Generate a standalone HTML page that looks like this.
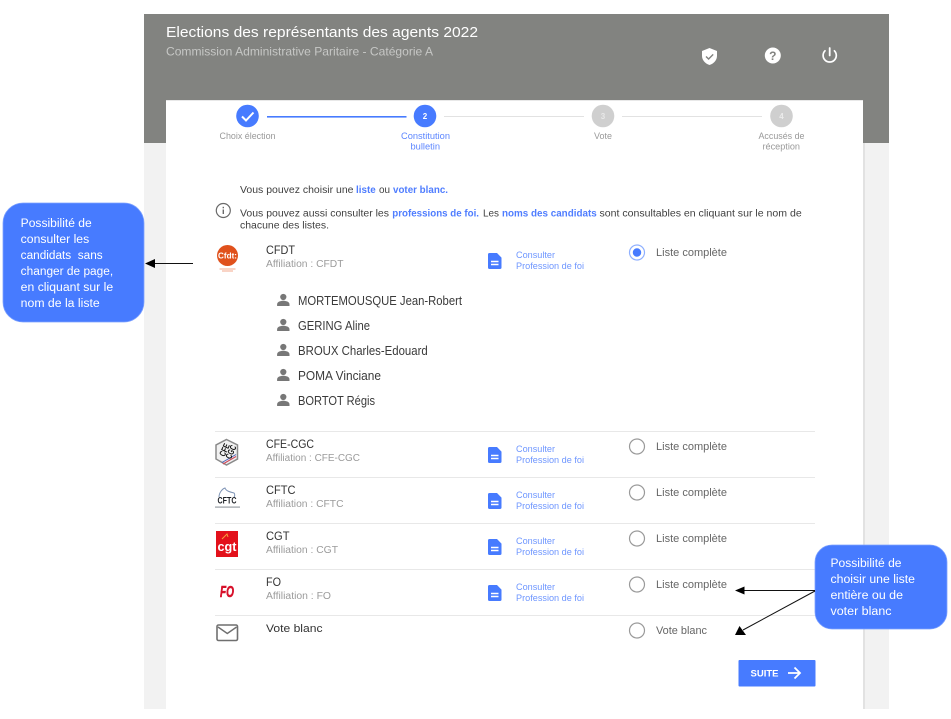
<!DOCTYPE html>
<html lang="fr">
<head>
<meta charset="utf-8">
<title>Elections des représentants des agents 2022</title>
<style>
html,body{margin:0;padding:0;background:#fff;width:951px;height:719px;overflow:hidden}
svg{display:block}
text{font-family:"Liberation Sans",sans-serif;white-space:pre}
.d{fill:#3f3f3f;font-size:10px}
.n{fill:#333;font-size:12px}
.a{fill:#9b9b9b;font-size:10px}
.c{fill:#6e96ff;font-size:9px}
.r{fill:#666;font-size:11px}
.p{fill:#3a3a3a;font-size:12.5px}
.s{font-size:9px;fill:#999}
.b{fill:#4f7dff;font-size:10px;font-weight:bold}
.w{fill:#fff;font-size:11.5px}
</style>
</head>
<body>
<svg width="951" height="719" viewBox="0 0 951 719" xmlns="http://www.w3.org/2000/svg">
<defs>
<g id="doc"><path d="M1.5 0h7.500L13.500 4.600V14.500a1.500 1.500 0 0 1-1.500 1.500H1.500a1.500 1.500 0 0 1-1.500-1.500V1.500a1.500 1.500 0 0 1 1.500-1.500z" fill="#477bff"/><path d="M3 8.500h7.500M3 11.500h7.500" stroke="#fff" stroke-width="1.500"/></g>
<g id="per"><circle cx="0" cy="-3" r="3.100" fill="#777"/><path d="M-6.200 6v-1.800C-6.200 1.800-2.500.8 0 .8s6.200 1 6.200 3.400V6z" fill="#777"/></g>
<g id="rad"><circle r="7.500" fill="#fff" stroke="#9a9a9a" stroke-width="1.200"/></g>
</defs>

<rect x="144" y="14" width="745" height="695" fill="#f2f2f2"/>
<rect x="144" y="14" width="745" height="129" fill="#828380"/>
<rect x="863" y="143" width="2" height="566" fill="#e2e2e2"/>
<rect x="166" y="100" width="697" height="609" fill="#fff"/>
<rect x="166" y="100" width="697" height="1" fill="#e8e8e8"/>

<text x="166" y="37" fill="#fff" font-size="15" textLength="312" lengthAdjust="spacingAndGlyphs">Elections des représentants des agents 2022</text>
<text x="166" y="55.500" fill="#c6c7c5" font-size="12" textLength="267" lengthAdjust="spacingAndGlyphs">Commission Administrative Paritaire - Catégorie A</text>

<path d="M709.500 48l7.500 3v4.800c0 4.400-3.200 8-7.500 9.200-4.300-1.200-7.500-4.800-7.500-9.200V51z" fill="#fff"/>
<path d="M706 56.500l2.600 2.500 4.600-4.600" fill="none" stroke="#828380" stroke-width="1.400"/>
<circle cx="772.800" cy="55.500" r="8" fill="#fff"/>
<text x="772.800" y="60" text-anchor="middle" fill="#828380" font-size="12" font-weight="bold">?</text>
<path d="M829.700 48v7.500" stroke="#fff" stroke-width="1.800" stroke-linecap="round"/>
<path d="M825 50.800a6.600 6.600 0 1 0 9.400 0" fill="none" stroke="#fff" stroke-width="1.700" stroke-linecap="round"/>

<rect x="267" y="116" width="139.500" height="1.600" fill="#477bff"/>
<rect x="444" y="116" width="140" height="1" fill="#e2e2e2"/>
<rect x="622" y="116" width="140" height="1" fill="#e2e2e2"/>
<circle cx="247.500" cy="116" r="11.300" fill="#477bff"/>
<path d="M242 116.500l4 4 7.500-8" fill="none" stroke="#fff" stroke-width="2"/>
<circle cx="425" cy="116" r="11.300" fill="#477bff"/>
<text x="425" y="119" text-anchor="middle" fill="#fff" font-size="8" font-weight="bold">2</text>
<circle cx="603" cy="116" r="11.300" fill="#cfcfcf"/>
<text x="603" y="119" text-anchor="middle" fill="#e8e8e8" font-size="8" font-weight="bold">3</text>
<circle cx="781.500" cy="116" r="11.300" fill="#cfcfcf"/>
<text x="781.500" y="119" text-anchor="middle" fill="#ececec" font-size="8" font-weight="bold">4</text>

<text class="s" x="219.500" y="139" textLength="56" lengthAdjust="spacingAndGlyphs">Choix élection</text>
<text x="401" y="139" fill="#5c86ff" font-size="9" textLength="49" lengthAdjust="spacingAndGlyphs">Constitution</text>
<text x="410.500" y="149.500" fill="#5c86ff" font-size="9" textLength="29.500" lengthAdjust="spacingAndGlyphs">bulletin</text>
<text class="s" x="594" y="139" textLength="18" lengthAdjust="spacingAndGlyphs">Vote</text>
<text class="s" x="758.500" y="139" textLength="46" lengthAdjust="spacingAndGlyphs">Accusés de</text>
<text class="s" x="762.500" y="149.500" textLength="37.500" lengthAdjust="spacingAndGlyphs">réception</text>

<text class="d" x="240" y="193" textLength="113.500" lengthAdjust="spacingAndGlyphs">Vous pouvez choisir une</text>
<text class="b" x="356" y="193" textLength="19.700" lengthAdjust="spacingAndGlyphs">liste</text>
<text class="d" x="379" y="193" textLength="11" lengthAdjust="spacingAndGlyphs">ou</text>
<text class="b" x="393" y="193" textLength="55" lengthAdjust="spacingAndGlyphs">voter blanc.</text>

<circle cx="223.300" cy="210.500" r="7" fill="none" stroke="#6a6a6a" stroke-width="1.200"/>
<rect x="222.600" y="209.500" width="1.400" height="4.500" fill="#6a6a6a"/>
<rect x="222.600" y="206.800" width="1.400" height="1.500" fill="#6a6a6a"/>

<text class="d" x="240" y="216.500" textLength="149" lengthAdjust="spacingAndGlyphs">Vous pouvez aussi consulter les</text>
<text class="b" x="392.300" y="216.500" textLength="86.700" lengthAdjust="spacingAndGlyphs">professions de foi.</text>
<text class="d" x="483" y="216.500" textLength="16" lengthAdjust="spacingAndGlyphs">Les</text>
<text class="b" x="502" y="216.500" textLength="94.700" lengthAdjust="spacingAndGlyphs">noms des candidats</text>
<text class="d" x="599.500" y="216.500" textLength="202.200" lengthAdjust="spacingAndGlyphs">sont consultables en cliquant sur le nom de</text>
<text class="d" x="240" y="228.500" textLength="89" lengthAdjust="spacingAndGlyphs">chacune des listes.</text>

<!-- CFDT -->
<circle cx="227.500" cy="255.500" r="10.500" fill="#e0511c"/>
<text x="227.500" y="258.500" text-anchor="middle" fill="#fff" font-size="8.500" font-weight="bold" textLength="19" lengthAdjust="spacingAndGlyphs">Cfdt:</text>
<rect x="219.500" y="268.500" width="16" height="1" fill="#f3a98c"/>
<rect x="222" y="270.500" width="11" height="1" fill="#f3a98c"/>
<text class="n" x="266" y="254" textLength="29" lengthAdjust="spacingAndGlyphs">CFDT</text>
<text class="a" x="266" y="267" textLength="77.500" lengthAdjust="spacingAndGlyphs">Affiliation : CFDT</text>
<use href="#doc" x="488" y="253"/>
<text class="c" x="516" y="258" textLength="39" lengthAdjust="spacingAndGlyphs">Consulter</text>
<text class="c" x="516" y="269" textLength="68" lengthAdjust="spacingAndGlyphs">Profession de foi</text>
<circle cx="637" cy="252.500" r="7.500" fill="#fff" stroke="#8fb0ff" stroke-width="1.200"/>
<circle cx="637" cy="252.500" r="4.200" fill="#477bff"/>
<text class="r" x="656" y="256" textLength="71" lengthAdjust="spacingAndGlyphs">Liste complète</text>

<!-- Candidats -->
<use href="#per" x="283.300" y="300"/>
<text class="p" x="298" y="305" textLength="164" lengthAdjust="spacingAndGlyphs">MORTEMOUSQUE Jean-Robert</text>
<use href="#per" x="283.300" y="325"/>
<text class="p" x="298" y="330" textLength="72" lengthAdjust="spacingAndGlyphs">GERING Aline</text>
<use href="#per" x="283.300" y="350"/>
<text class="p" x="298" y="355" textLength="129.700" lengthAdjust="spacingAndGlyphs">BROUX Charles-Edouard</text>
<use href="#per" x="283.300" y="375"/>
<text class="p" x="298" y="380" textLength="83" lengthAdjust="spacingAndGlyphs">POMA Vinciane</text>
<use href="#per" x="283.300" y="400"/>
<text class="p" x="298" y="405" textLength="77" lengthAdjust="spacingAndGlyphs">BORTOT Régis</text>

<!-- Séparateurs -->
<g fill="#e8e8e8">
<rect x="215" y="431" width="600" height="1"/>
<rect x="215" y="477" width="600" height="1"/>
<rect x="215" y="523" width="600" height="1"/>
<rect x="215" y="569" width="600" height="1"/>
<rect x="215" y="615" width="600" height="1"/>
</g>

<!-- CFE-CGC -->
<path d="M226.500 439.500l11 5.500v14l-11 6-10.500-6v-14z" fill="#f1f1f1" stroke="#8a8a8a" stroke-width="1.500"/>
<path d="M223 464l13-7.500" stroke="#d04a5a" stroke-width="1.200"/>
<path d="M222 462.500l14-8" stroke="#4a62b8" stroke-width="1"/>
<text transform="rotate(-65 224.500 450)" x="224.500" y="453" text-anchor="middle" fill="#111" font-size="9" font-weight="bold" textLength="13" lengthAdjust="spacingAndGlyphs">CFE</text>
<text transform="rotate(-65 231 452)" x="231" y="455" text-anchor="middle" fill="#111" font-size="9" font-weight="bold" textLength="14" lengthAdjust="spacingAndGlyphs">CGC</text>
<text class="n" x="266" y="448" textLength="48" lengthAdjust="spacingAndGlyphs">CFE-CGC</text>
<text class="a" x="266" y="461" textLength="94" lengthAdjust="spacingAndGlyphs">Affiliation : CFE-CGC</text>
<use href="#doc" x="488" y="447"/>
<text class="c" x="516" y="452" textLength="39" lengthAdjust="spacingAndGlyphs">Consulter</text>
<text class="c" x="516" y="463" textLength="68" lengthAdjust="spacingAndGlyphs">Profession de foi</text>
<use href="#rad" x="637" y="446.500"/>
<text class="r" x="656" y="450" textLength="71" lengthAdjust="spacingAndGlyphs">Liste complète</text>

<!-- CFTC -->
<path d="M219 497c0-4 3-8 6-9 1 3 5 4 9 5 1 1 1 3 0 4" fill="none" stroke="#7d93b5" stroke-width="1"/>
<text x="227" y="503.500" text-anchor="middle" fill="#1c1f24" font-size="9.500" font-weight="bold" textLength="19" lengthAdjust="spacingAndGlyphs">CFTC</text>
<rect x="215" y="506.500" width="25" height="1.200" fill="#9a9fa6"/>
<text class="n" x="266" y="494" textLength="29.500" lengthAdjust="spacingAndGlyphs">CFTC</text>
<text class="a" x="266" y="507" textLength="77.500" lengthAdjust="spacingAndGlyphs">Affiliation : CFTC</text>
<use href="#doc" x="488" y="493"/>
<text class="c" x="516" y="498" textLength="39" lengthAdjust="spacingAndGlyphs">Consulter</text>
<text class="c" x="516" y="509" textLength="68" lengthAdjust="spacingAndGlyphs">Profession de foi</text>
<use href="#rad" x="637" y="492.500"/>
<text class="r" x="656" y="496" textLength="71" lengthAdjust="spacingAndGlyphs">Liste complète</text>

<!-- CGT -->
<rect x="216" y="531" width="22" height="26" fill="#e3111b"/>
<path d="M222 539l5-5 1 3" fill="none" stroke="#f6a23a" stroke-width="1"/>
<text x="227" y="551" text-anchor="middle" fill="#fff" font-size="13" font-weight="bold" textLength="19" lengthAdjust="spacingAndGlyphs">cgt</text>
<text class="n" x="266" y="540" textLength="23.500" lengthAdjust="spacingAndGlyphs">CGT</text>
<text class="a" x="266" y="553" textLength="72" lengthAdjust="spacingAndGlyphs">Affiliation : CGT</text>
<use href="#doc" x="488" y="539"/>
<text class="c" x="516" y="544" textLength="39" lengthAdjust="spacingAndGlyphs">Consulter</text>
<text class="c" x="516" y="555" textLength="68" lengthAdjust="spacingAndGlyphs">Profession de foi</text>
<use href="#rad" x="637" y="538.500"/>
<text class="r" x="656" y="542" textLength="71" lengthAdjust="spacingAndGlyphs">Liste complète</text>

<!-- FO -->
<text x="220" y="597" fill="#d7102a" stroke="#d7102a" stroke-width=".6" font-size="16" font-weight="bold" font-style="italic" textLength="14" lengthAdjust="spacingAndGlyphs">FO</text>
<text class="n" x="266" y="586" textLength="15" lengthAdjust="spacingAndGlyphs">FO</text>
<text class="a" x="266" y="599" textLength="65" lengthAdjust="spacingAndGlyphs">Affiliation : FO</text>
<use href="#doc" x="488" y="585"/>
<text class="c" x="516" y="590" textLength="39" lengthAdjust="spacingAndGlyphs">Consulter</text>
<text class="c" x="516" y="601" textLength="68" lengthAdjust="spacingAndGlyphs">Profession de foi</text>
<use href="#rad" x="637" y="584.500"/>
<text class="r" x="656" y="588" textLength="71" lengthAdjust="spacingAndGlyphs">Liste complète</text>

<!-- Vote blanc -->
<rect x="217" y="625" width="20.500" height="15.500" rx="1.500" fill="none" stroke="#6f6f6f" stroke-width="1.600"/>
<path d="M218 627l9.300 6.500 9.300-6.500" fill="none" stroke="#6f6f6f" stroke-width="1.400"/>
<text class="n" x="266" y="632" font-size="11" style="font-size:11px" textLength="56.500" lengthAdjust="spacingAndGlyphs">Vote blanc</text>
<use href="#rad" x="637" y="630.500"/>
<text class="r" x="656" y="634" textLength="51" lengthAdjust="spacingAndGlyphs">Vote blanc</text>

<!-- Bouton -->
<rect x="738.500" y="660" width="77" height="26.500" rx="1" fill="#477bff"/>
<text x="750.500" y="676.500" fill="#fff" font-size="9.500" font-weight="bold" textLength="28" lengthAdjust="spacingAndGlyphs">SUITE</text>
<path d="M788 673h12M794.500 667.500l5.500 5.500-5.500 5.500" fill="none" stroke="#fff" stroke-width="1.800"/>

<!-- Bulle gauche -->
<rect x="3" y="203" width="141" height="119" rx="20" fill="#477bff" stroke="#7fa3ff" stroke-width=".8"/>
<text class="w" x="20.700" y="227" textLength="71" lengthAdjust="spacingAndGlyphs">Possibilité de</text>
<text class="w" x="20.700" y="243" textLength="68.500" lengthAdjust="spacingAndGlyphs">consulter les</text>
<text class="w" x="20.700" y="259" textLength="82" lengthAdjust="spacingAndGlyphs">candidats  sans</text>
<text class="w" x="20.700" y="275" textLength="92.500" lengthAdjust="spacingAndGlyphs">changer de page,</text>
<text class="w" x="20.700" y="291" textLength="92.500" lengthAdjust="spacingAndGlyphs">en cliquant sur le</text>
<text class="w" x="20.700" y="307" textLength="79" lengthAdjust="spacingAndGlyphs">nom de la liste</text>

<!-- Flèche gauche -->
<path d="M193 263.500h-39" stroke="#111" stroke-width="1"/>
<path d="M145 263.500l10-4.500v9z" fill="#000"/>

<!-- Bulle droite -->
<rect x="815" y="545" width="132" height="84" rx="17" fill="#477bff" stroke="#7fa3ff" stroke-width=".8"/>
<text class="w" x="830.500" y="567" textLength="71" lengthAdjust="spacingAndGlyphs">Possibilité de</text>
<text class="w" x="830.500" y="583" textLength="84.500" lengthAdjust="spacingAndGlyphs">choisir une liste</text>
<text class="w" x="830.500" y="599" textLength="72.500" lengthAdjust="spacingAndGlyphs">entière ou de</text>
<text class="w" x="830.500" y="615" textLength="61" lengthAdjust="spacingAndGlyphs">voter blanc</text>

<!-- Flèches droite -->
<path d="M815 590.500h-71" stroke="#111" stroke-width="1"/>
<path d="M735 590.500l9.500-4v8z" fill="#000"/>
<path d="M815 591l-72 39" stroke="#111" stroke-width="1"/>
<path d="M735 635l4.500-9 6.500 9z" fill="#000"/>
</svg>
</body>
</html>
